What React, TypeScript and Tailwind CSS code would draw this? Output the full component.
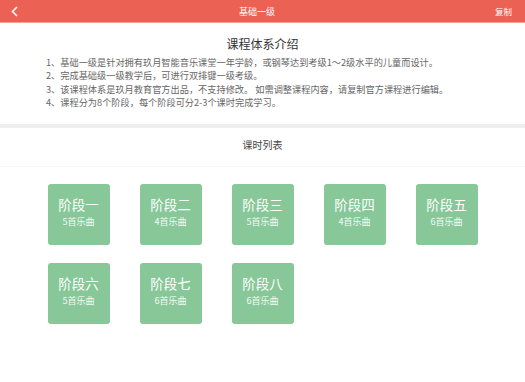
import React from "react";

const stages = [
  { name: "阶段一", count: 5 },
  { name: "阶段二", count: 4 },
  { name: "阶段三", count: 5 },
  { name: "阶段四", count: 4 },
  { name: "阶段五", count: 6 },
  { name: "阶段六", count: 5 },
  { name: "阶段七", count: 6 },
  { name: "阶段八", count: 6 },
];

const intro = [
  "1、基础一级是针对拥有玖月智能音乐课堂一年学龄，或钢琴达到考级1～2级水平的儿童而设计。",
  "2、完成基础级一级教学后，可进行双排键一级考级。",
  "3、该课程体系是玖月教育官方出品，不支持修改。 如需调整课程内容，请复制官方课程进行编辑。",
  "4、课程分为8个阶段，每个阶段可分2-3个课时完成学习。",
];

export default function App() {
  return (
    <div
      className="w-full min-h-[382px] bg-white text-[#333]"
      style={{ fontFamily: '"Noto Sans CJK SC", "Noto Sans", sans-serif' }}
    >
      {/* Header */}
      <div className="h-[23px] bg-[#eb6153] border-b border-[#f2a196] flex items-center justify-between px-[10px]">
        <svg width="8" height="11" viewBox="0 0 8 11" className="ml-[1px]">
          <path d="M6 1 L1.5 5.5 L6 10" fill="none" stroke="white" strokeWidth="1.6" />
        </svg>
        <span className="text-[9px] text-white leading-none">基础一级</span>
        <span className="text-[8.5px] text-white leading-none mr-[3px]">复制</span>
      </div>

      {/* Intro */}
      <div className="pt-[13px] pb-[15px]">
        <h2 className="text-center text-[12px] leading-[16px] text-[#333]">课程体系介绍</h2>
        <div className="mt-[4px] pl-[46px] text-[9.2px] leading-[13.3px] text-[#666]">
          {intro.map((line) => (
            <p key={line}>{line}</p>
          ))}
        </div>
      </div>

      <div className="h-[4px] bg-[#efefef]" />

      {/* Lesson list */}
      <div className="pt-[10px] pb-[14px] border-b border-[#f5f5f5]">
        <h3 className="text-center text-[10px] leading-[14px] text-[#444]">课时列表</h3>
      </div>

      <div className="pt-[17px] grid grid-cols-[repeat(5,62px)] gap-x-[30px] gap-y-[18px] justify-center">
        {stages.map((s) => (
          <div
            key={s.name}
            className="h-[61px] rounded-[3px] bg-[#87c798] flex flex-col items-center pt-[11px] text-white"
          >
            <div className="text-[13.5px] leading-[18px]">{s.name}</div>
            <div className="mt-[3px] text-[9px] leading-[12px] text-white/90">{s.count}首乐曲</div>
          </div>
        ))}
      </div>
    </div>
  );
}
